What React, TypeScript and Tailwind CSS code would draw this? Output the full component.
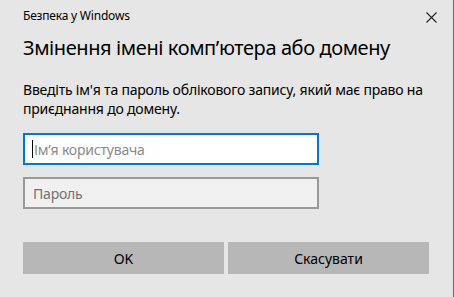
import React from "react";

export default function App() {
  return (
    <div
      className="relative w-[454px] h-[297px] bg-[#e6e6e6] border-r border-[#1979ca] overflow-hidden text-black"
      style={{ fontFamily: '"Noto Sans", "Open Sans", sans-serif' }}
    >
      <div className="flex items-start justify-between pl-[23px] pr-[16px] pt-[8px] h-[28px]">
        <div className="text-[12px] leading-[16px] tracking-[-0.2px]">Безпека у Windows</div>
        <svg width="11" height="11" viewBox="0 0 11 11" className="mt-[4px]">
          <path d="M0.5 0.5 L10.5 10.5 M10.5 0.5 L0.5 10.5" stroke="#222" strokeWidth="1.1" fill="none" />
        </svg>
      </div>
      <div className="pl-[23px] pt-[6px] text-[20px] leading-[28px] tracking-[-0.4px]">
        Змінення імені комп’ютера або домену
      </div>
      <div className="pl-[23px] pr-[20px] pt-[18px] text-[14px] leading-[19px] tracking-[-0.2px]">
        Введіть ім'я та пароль облікового запису, який має право на приєднання до домену.
      </div>
      <div className="pl-[23px] pt-[15px] flex flex-col gap-[12px]">
        <div className="w-[296px] h-[32px] bg-white border-2 border-[#0078d7] flex items-center pl-[7px]">
          <div className="w-[1px] h-[18px] bg-black mr-[1px]" />
          <span className="text-[14px] text-[#8a8a8a] tracking-[-0.2px]">Ім’я користувача</span>
        </div>
        <div className="w-[296px] h-[32px] bg-[#f0f0f0] border-2 border-[#999999] flex items-center pl-[8px]">
          <span className="text-[14px] text-[#707070] tracking-[-0.2px]">Пароль</span>
        </div>
      </div>
      <div className="pl-[23px] pt-[33px] flex gap-[4px]">
        <div className="w-[201px] h-[32px] bg-[#b7b7b7] flex items-center justify-center text-[14px]">OK</div>
        <div className="w-[201px] h-[32px] bg-[#b7b7b7] flex items-center justify-center text-[14px]">Скасувати</div>
      </div>
    </div>
  );
}
